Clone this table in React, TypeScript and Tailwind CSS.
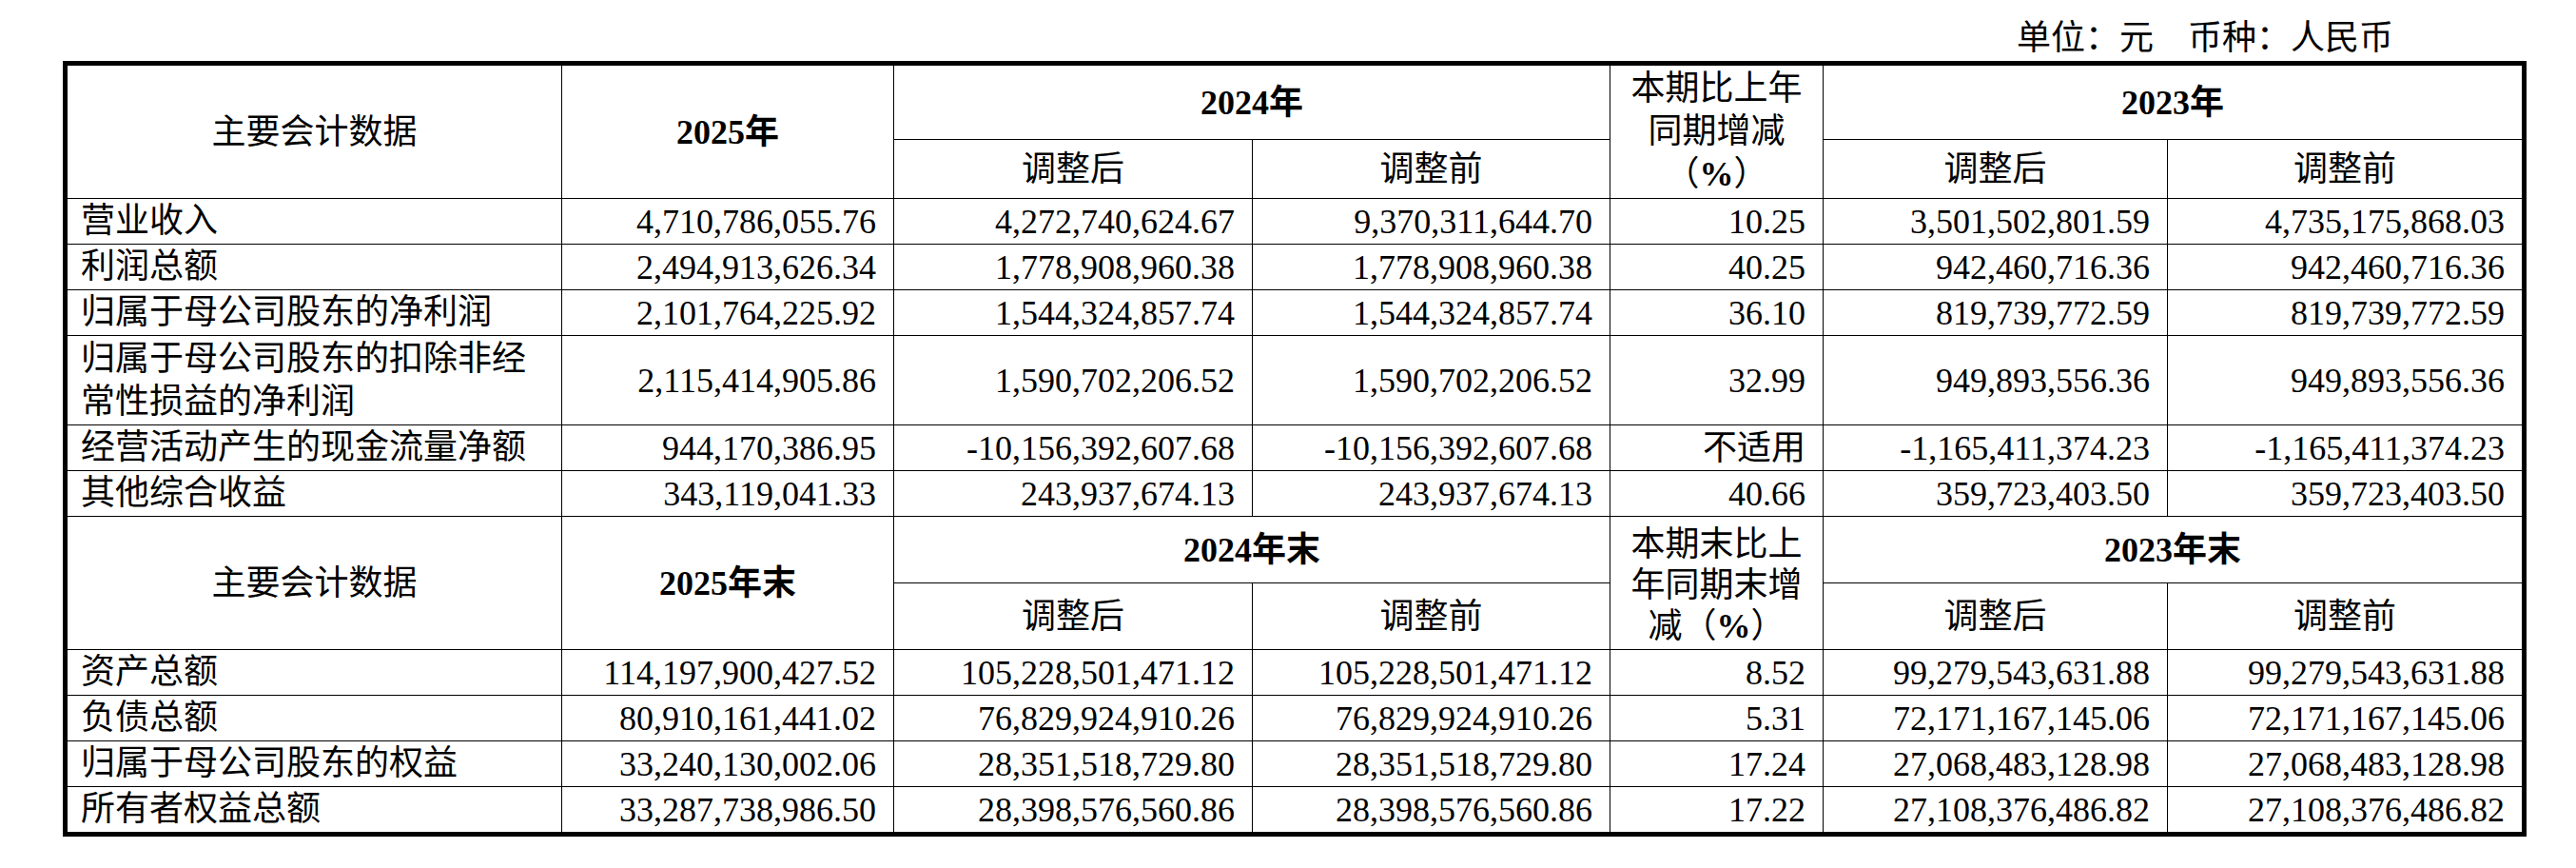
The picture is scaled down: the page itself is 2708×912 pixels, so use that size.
import React from "react";

const font = "font-['Liberation_Serif','Noto_Sans_CJK_SC',serif]";

type Row = { label: React.ReactNode; values: string[]; tall?: boolean };

const incomeRows: Row[] = [
  { label: "营业收入", values: ["4,710,786,055.76", "4,272,740,624.67", "9,370,311,644.70", "10.25", "3,501,502,801.59", "4,735,175,868.03"] },
  { label: "利润总额", values: ["2,494,913,626.34", "1,778,908,960.38", "1,778,908,960.38", "40.25", "942,460,716.36", "942,460,716.36"] },
  { label: "归属于母公司股东的净利润", values: ["2,101,764,225.92", "1,544,324,857.74", "1,544,324,857.74", "36.10", "819,739,772.59", "819,739,772.59"] },
  {
    label: (
      <>
        归属于母公司股东的扣除非经
        <br />
        常性损益的净利润
      </>
    ),
    values: ["2,115,414,905.86", "1,590,702,206.52", "1,590,702,206.52", "32.99", "949,893,556.36", "949,893,556.36"],
    tall: true,
  },
  { label: "经营活动产生的现金流量净额", values: ["944,170,386.95", "-10,156,392,607.68", "-10,156,392,607.68", "不适用", "-1,165,411,374.23", "-1,165,411,374.23"] },
  { label: "其他综合收益", values: ["343,119,041.33", "243,937,674.13", "243,937,674.13", "40.66", "359,723,403.50", "359,723,403.50"] },
];

const balanceRows: Row[] = [
  { label: "资产总额", values: ["114,197,900,427.52", "105,228,501,471.12", "105,228,501,471.12", "8.52", "99,279,543,631.88", "99,279,543,631.88"] },
  { label: "负债总额", values: ["80,910,161,441.02", "76,829,924,910.26", "76,829,924,910.26", "5.31", "72,171,167,145.06", "72,171,167,145.06"] },
  { label: "归属于母公司股东的权益", values: ["33,240,130,002.06", "28,351,518,729.80", "28,351,518,729.80", "17.24", "27,068,483,128.98", "27,068,483,128.98"] },
  { label: "所有者权益总额", values: ["33,287,738,986.50", "28,398,576,560.86", "28,398,576,560.86", "17.22", "27,108,376,486.82", "27,108,376,486.82"] },
];

const Head = ({ children, className = "" }: { children: React.ReactNode; className?: string }) => (
  <div className={`flex items-center justify-center bg-white text-center ${className}`}>{children}</div>
);

const DataRows = ({ rows }: { rows: Row[] }) => (
  <>
    {rows.map((r, i) => (
      <React.Fragment key={i}>
        <div className="flex items-center bg-white pl-[14px] leading-[45px]">
          <span>{r.label}</span>
        </div>
        {r.values.map((v, j) => (
          <div key={j} className="flex items-center justify-end bg-white pr-[18px]">
            {v}
          </div>
        ))}
      </React.Fragment>
    ))}
  </>
);

const HeaderBlock = ({ suffix, change }: { suffix: string; change: React.ReactNode }) => (
  <>
    <Head className="row-span-2">主要会计数据</Head>
    <Head className="row-span-2 font-bold">2025年{suffix}</Head>
    <Head className="col-span-2 font-bold">2024年{suffix}</Head>
    <Head className="row-span-2">{change}</Head>
    <Head className="col-span-2 font-bold">2023年{suffix}</Head>
    <Head>调整后</Head>
    <Head>调整前</Head>
    <Head>调整后</Head>
    <Head>调整前</Head>
  </>
);

export default function App() {
  return (
    <div className={`w-[2708px] h-[912px] bg-white text-black text-[36px] ${font}`}>
      <div className="h-[64px] pt-[22px] pr-[192px] text-right leading-[36px]">单位：元　币种：人民币</div>
      <div className="ml-[66px] w-[2590px] border-[5px] border-black">
        <div className="grid grid-cols-[519px_348px_376px_375px_223px_361px_372px] grid-rows-[77px_61px_47px_47px_47px_93px_47px_47px_69px_69px_47px_47px_47px_47px] gap-px bg-black">
          <HeaderBlock
            suffix=""
            change={
              <div className="leading-[45px]">
                本期比上年
                <br />
                同期增减
                <br />
                （<span className="font-bold">%</span>）
              </div>
            }
          />
          <DataRows rows={incomeRows} />
          <HeaderBlock
            suffix="末"
            change={
              <div className="pt-[6px] leading-[43px]">
                本期末比上
                <br />
                年同期末增
                <br />
                减（<span className="font-bold">%</span>）
              </div>
            }
          />
          <DataRows rows={balanceRows} />
        </div>
      </div>
    </div>
  );
}
